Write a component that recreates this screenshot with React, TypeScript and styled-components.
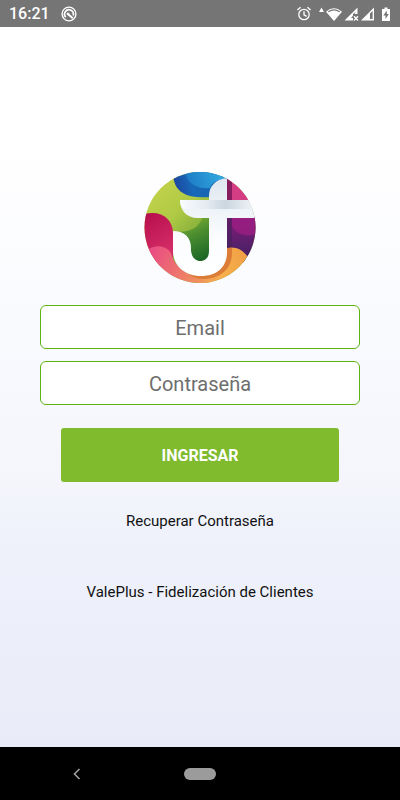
import React from "react";
import styled, { createGlobalStyle } from "styled-components";

const GlobalStyle = createGlobalStyle`
  *, *::before, *::after { box-sizing: border-box; }
  body { margin: 0; font-family: Roboto, sans-serif; }
`;

const Screen = styled.div`
  display: flex;
  flex-direction: column;
  min-height: 100vh;
`;

const StatusBar = styled.header`
  display: flex;
  align-items: center;
  justify-content: space-between;
  height: 27px;
  padding: 0 9px;
  background: #757575;
  color: #fff;
  font-size: 16px;
  font-weight: 500;
`;

const StatusGroup = styled.div`
  display: flex;
  align-items: center;
  gap: 11px;
`;

const Content = styled.main`
  flex: 1;
  display: flex;
  flex-direction: column;
  align-items: center;
  justify-content: center;
  padding: 0 40px;
  background: linear-gradient(#fff 0%, #fff 15%, #f9fafe 42%, #f5f6fb 62%, #eff2fb 70%, #e9ebf8 100%);
`;

const Form = styled.form`
  display: flex;
  flex-direction: column;
  align-items: center;
  gap: 12px;
  width: 100%;
  margin-top: 22px;
`;

const Field = styled.input`
  width: 100%;
  height: 44px;
  padding: 2px 12px 0;
  border: 1px solid #5cb413;
  border-radius: 6px;
  background: #fff;
  color: #222;
  font: 400 20px Roboto, sans-serif;
  text-align: center;
  outline: none;
  &::placeholder { color: #6e6e6e; opacity: 1; }
`;

const SubmitButton = styled.button`
  width: calc(100% - 42px);
  height: 54px;
  margin-top: 11px;
  border: 0;
  border-radius: 3px;
  background: #80ba2d;
  color: #fff;
  font: 700 16px Roboto, sans-serif;
`;

const RecoverLink = styled.a`
  margin-top: 28px;
  color: #111;
  font-size: 15px;
  line-height: 22px;
  text-decoration: none;
`;

const Tagline = styled.p`
  margin: 49px 0 0;
  color: #111;
  font-size: 15px;
  line-height: 22px;
`;

const NavigationBar = styled.nav`
  display: grid;
  grid-template-columns: 1fr auto 1fr;
  align-items: center;
  height: 53px;
  background: #000;
`;

const NavButton = styled.button`
  display: flex;
  justify-content: center;
  padding: 0;
  border: 0;
  background: none;
`;

const BackButton = styled(NavButton)`
  justify-self: center;
  margin-right: 31px;
`;

const HomePill = styled.span`
  width: 32px;
  height: 12px;
  border-radius: 6px;
  background: #9b9b9b;
`;

function NotificationIcon() {
  return (
    <svg width="16" height="16" viewBox="0 0 16 16" fill="none" stroke="#fff" aria-hidden="true">
      <circle cx="8" cy="8" r="6.9" strokeWidth="1.4" />
      <path d="M4.8 11.2A4.4 4.4 0 1 1 12.2 9.5" strokeWidth="1.7" />
      <path d="M6 7.2 11.8 12.2" strokeWidth="2" />
      <circle cx="7.2" cy="8" r="1.2" fill="#fff" stroke="none" />
    </svg>
  );
}

function StatusIcons() {
  return (
    <svg width="96" height="18" viewBox="0 0 96 18" fill="none" aria-hidden="true">
      <g stroke="#fff" strokeWidth="1.3">
        <circle cx="9" cy="9.5" r="5.2" />
        <path d="M9 6.3V9.8L11.6 11.4M2.4 5 5.6 2.3M12.4 2.3 15.6 5" />
      </g>
      <path d="M24 7 26.5 2.5 29 7Z" fill="#fff" />
      <path d="M31 6.7Q39 0 47 6.7L39 16Z" fill="#fff" />
      <path d="M33.3 6.8Q39 3 44.7 6.8" stroke="#757575" strokeWidth="1.3" />
      <path d="M49.5 15.5 62.5 2.5V9H58V15.5Z" fill="#fff" />
      <path d="M58.5 8.5V13H56L61 7Z" fill="#757575" />
      <path d="M59 11.2 63 15.5M63 11.2 59 15.5" stroke="#fff" strokeWidth="1.3" />
      <path d="M66 15.5 79 2.5V15.5Z" fill="#fff" />
      <path d="M75 8.5 77.6 5.9V14.1H75Z" fill="#757575" />
      <path d="M87 4H89.5V2.5H92.5V4H95V16H87Z" fill="#fff" />
      <path d="M91.8 5.5 88.3 10.5H90.5V14L93.8 9H91.8Z" fill="#757575" />
    </svg>
  );
}

function Logo() {
  return (
    <svg width="112" height="112" viewBox="0 0 112 112" role="img" aria-label="ValePlus">
      <defs>
        <clipPath id="disc"><circle cx="56" cy="56.5" r="55.5" /></clipPath>
        <linearGradient id="green" gradientUnits="userSpaceOnUse" x1="12" y1="18" x2="60" y2="68">
          <stop stopColor="#c1d14a" /><stop offset=".45" stopColor="#b0ca45" /><stop offset="1" stopColor="#76a637" />
        </linearGradient>
        <linearGradient id="innerGreen" gradientUnits="userSpaceOnUse" x1="44" y1="48" x2="62" y2="86">
          <stop stopColor="#7eae36" /><stop offset=".4" stopColor="#4b8d2f" /><stop offset="1" stopColor="#1d6827" />
        </linearGradient>
        <linearGradient id="blue" gradientUnits="userSpaceOnUse" x1="30" y1="25" x2="68" y2="16">
          <stop stopColor="#1f419c" /><stop offset=".5" stopColor="#1768b8" /><stop offset="1" stopColor="#1664b0" />
        </linearGradient>
        <linearGradient id="sky" gradientUnits="userSpaceOnUse" x1="42" y1="18" x2="76" y2="4">
          <stop stopColor="#1b76c1" /><stop offset="1" stopColor="#31a7df" />
        </linearGradient>
        <linearGradient id="purple" x1="0" y1="0" x2="0" y2="1">
          <stop stopColor="#891a78" /><stop offset=".6" stopColor="#57206b" /><stop offset="1" stopColor="#3b1d60" />
        </linearGradient>
        <linearGradient id="crimson" gradientUnits="userSpaceOnUse" x1="2" y1="44" x2="24" y2="80">
          <stop stopColor="#b7104e" /><stop offset="1" stopColor="#d32c66" />
        </linearGradient>
        <linearGradient id="coral" gradientUnits="userSpaceOnUse" x1="10" y1="78" x2="66" y2="110">
          <stop stopColor="#e94f82" /><stop offset=".5" stopColor="#ee746d" /><stop offset="1" stopColor="#f0a057" />
        </linearGradient>
        <linearGradient id="orange" gradientUnits="userSpaceOnUse" x1="48" y1="108" x2="100" y2="82">
          <stop stopColor="#ee925b" /><stop offset=".5" stopColor="#f8b04c" /><stop offset="1" stopColor="#f0a044" />
        </linearGradient>
        <linearGradient id="bar">
          <stop stopColor="#fafcfe" /><stop offset=".35" stopColor="#e4ebf1" /><stop offset=".6" stopColor="#cbd6e0" /><stop offset="1" stopColor="#f3f6fa" />
        </linearGradient>
        <linearGradient id="stem" gradientUnits="userSpaceOnUse" x1="0" y1="7" x2="0" y2="105">
          <stop stopColor="#dee6ef" /><stop offset=".35" stopColor="#eff4f8" /><stop offset=".6" stopColor="#fafcfe" /><stop offset="1" stopColor="#fff" />
        </linearGradient>
      </defs>
      <g clipPath="url(#disc)">
        <rect width="112" height="112" fill="url(#green)" />
        <path d="M28 60C43 63 55 58 59 45H66V92H46V72C42 62 36 60 28 60Z" fill="url(#innerGreen)" />
        <path d="M29 0H84V26H66C54 27 45 26 39 22C32 18 29 11 29 0Z" fill="url(#blue)" />
        <path d="M41 0H84V7C74 8 67 12 66 17C52 19 42 11 41 0Z" fill="url(#sky)" />
        <path d="M83 0H112V30H83Z" fill="#d43d83" />
        <path d="M83 0H88V30H83Z" fill="#871c5e" />
        <path d="M83 46H112V92H83Z" fill="url(#purple)" />
        <path d="M88 46H112V63C101 67 91 62 88 55Z" fill="#9c1f84" opacity=".75" />
        <path d="M83 46H88V84H83Z" fill="#49205e" opacity=".65" />
        <path d="M0 43C18 39 28 48 29 61V95H0Z" fill="url(#crimson)" />
        <path d="M3 79C11 73 22 74 27 82C31 96 41 104 56 105H68V112H0V82Z" fill="url(#coral)" />
        <path d="M83 77C92 75 99 79 104 86L96 112H60V105C75 104 83 94 83 77Z" fill="url(#orange)" />
        <path d="M83 77H88V82C88 98 76 108 59 108C53 108 48 106 44 103C52 106 61 106 69 102C79 98 83 90 83 77Z" fill="#db7c37" />
        <path d="M36 29H65V25C65 15 72 8 83 7V29H112V47H83V81C83 96 73 105 57 105C40 105 29 94 29 80V60C41 60 47 67 47 77V80C48 87 52 90 56 90C62 90 65 86 65 80V47H54C42 47 36 39 36 29Z" fill="url(#stem)" />
        <path d="M36 29H112V38H40C37 36 36 33 36 29Z" fill="url(#bar)" />
      </g>
    </svg>
  );
}

export default function App() {
  return (
    <Screen>
      <GlobalStyle />
      <StatusBar>
        <StatusGroup><span>16:21</span><NotificationIcon /></StatusGroup>
        <StatusIcons />
      </StatusBar>
      <Content>
        <Logo />
        <Form onSubmit={(event: React.FormEvent) => event.preventDefault()}>
          <Field type="email" aria-label="Email" placeholder="Email" />
          <Field type="password" aria-label="Contraseña" placeholder="Contraseña" />
          <SubmitButton type="submit">INGRESAR</SubmitButton>
        </Form>
        <RecoverLink href="#recuperar">Recuperar Contraseña</RecoverLink>
        <Tagline>ValePlus - Fidelización de Clientes</Tagline>
      </Content>
      <NavigationBar>
        <BackButton type="button" aria-label="Atrás">
          <svg width="8" height="12" viewBox="0 0 8 12" fill="none" stroke="#9b9b9b" strokeWidth="1.7" aria-hidden="true">
            <path d="M6.5 1 1.5 6 6.5 11" />
          </svg>
        </BackButton>
        <NavButton type="button" aria-label="Inicio"><HomePill /></NavButton>
      </NavigationBar>
    </Screen>
  );
}
